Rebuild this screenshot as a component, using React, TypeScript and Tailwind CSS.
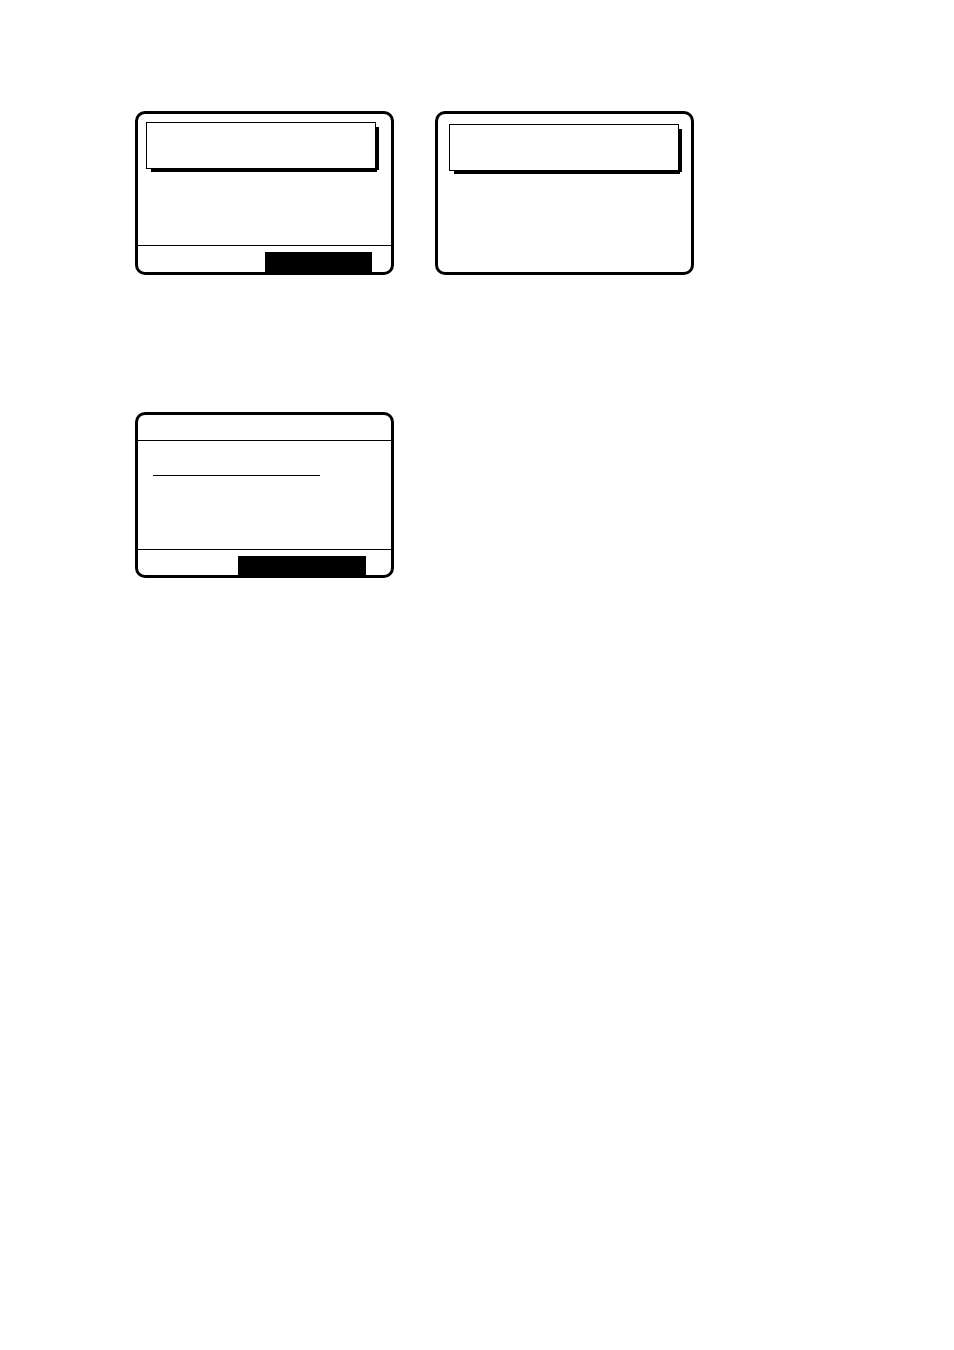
import type { ReactNode } from 'react';

function Screen({ className = '', children }: { className?: string; children: ReactNode }) {
  return (
    <section className={`w-[259px] flex flex-col bg-white border-3 border-black rounded-[10px] ${className}`}>
      {children}
    </section>
  );
}

// Blank title plate with a hard drop shadow
function TitlePlate() {
  return (
    <div className="w-[230px] h-[47px] bg-white border border-black shadow-[3px_5px_0_-2px_#000,5px_3px_0_-2px_#000]" />
  );
}

export default function App() {
  return (
    <main className="min-h-screen bg-white flex flex-col gap-[137px] pt-[111px] pl-[135px]">
      <div className="flex flex-wrap gap-[41px]">
        <Screen className="h-[164px]">
          <div className="flex-1 pt-2 pl-2">
            <TitlePlate />
          </div>
          {/* Footer with the highlighted key */}
          <div className="flex justify-end border-t border-black pt-[6px] pr-[19px]">
            <div className="w-[107px] h-5 bg-black" />
          </div>
        </Screen>

        <Screen className="h-[164px]">
          <div className="flex-1 pt-[10px] pl-[11px]">
            <TitlePlate />
          </div>
        </Screen>
      </div>

      <Screen className="h-[166px]">
        <div className="h-[26px] border-b border-black" />
        <div className="flex-1 pl-[15px]">
          <div className="w-[167px] h-[35px] border-b border-black" />
        </div>
        <div className="flex justify-end border-t border-black pt-[6px] pr-[25px]">
          <div className="w-[128px] h-[19px] bg-black" />
        </div>
      </Screen>
    </main>
  );
}
